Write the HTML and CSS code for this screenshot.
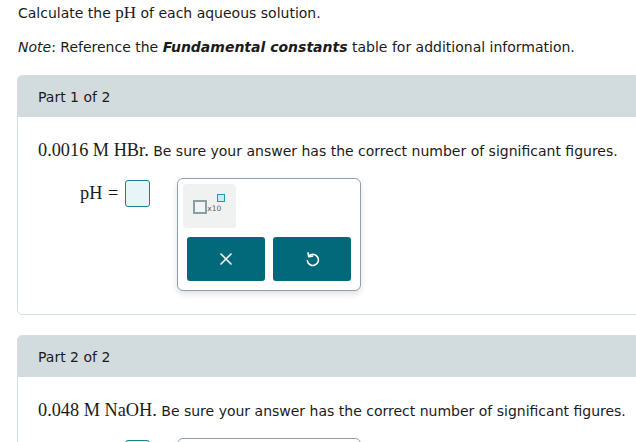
FILE: index.html
```html
<!DOCTYPE html>
<html>
<head>
<meta charset="utf-8">
<link rel="stylesheet" href="styles.css">
</head>
<body>
<div class="page">
  <div class="intro">
    <p class="line1">Calculate the <span class="math">pH</span> of each aqueous solution.</p>
    <p class="line2"><i>Note</i>: Reference the <b><i>Fundamental constants</i></b> table for additional information.</p>
  </div>

  <section class="card">
    <div class="card-head">Part 1 of 2</div>
    <div class="card-body">
      <p class="question"><span class="math big">0.0016 M HBr.</span> Be sure your answer has the correct number of significant figures.</p>
      <div class="answer-row">
        <span class="math big label">pH <span class="eq">=</span></span>
        <span class="answer-box"></span>
        <div class="popup">
          <div class="tile">
            <span class="sci">
              <span class="sci-base"></span><span class="sci-x">x10</span><span class="sci-exp"></span>
            </span>
          </div>
          <div class="btns">
            <button class="btn" aria-label="clear">
              <svg width="14" height="14" viewBox="0 0 14 14"><path d="M2 2 L12 12 M12 2 L2 12" stroke="#fff" stroke-width="1.6" stroke-linecap="round" fill="none"/></svg>
            </button>
            <button class="btn" aria-label="undo">
              <svg width="17" height="17" viewBox="0 0 16 16"><path d="M4.4 5.0 A5.2 5.2 0 1 1 3.2 9.2" stroke="#fff" stroke-width="1.5" fill="none" stroke-linecap="round"/><path d="M3.8 1.8 L4.4 5.4 L7.9 4.8" stroke="#fff" stroke-width="1.5" fill="none" stroke-linecap="round" stroke-linejoin="round"/></svg>
            </button>
          </div>
        </div>
      </div>
    </div>
  </section>

  <section class="card card2">
    <div class="card-head">Part 2 of 2</div>
    <div class="card-body">
      <p class="question"><span class="math big">0.048 M NaOH.</span> Be sure your answer has the correct number of significant figures.</p>
      <div class="answer-row">
        <span class="math big label">pH <span class="eq">=</span></span>
        <span class="answer-box"></span>
        <div class="popup"></div>
      </div>
    </div>
  </section>
</div>
</body>
</html>
```
FILE: styles.css
```css
html, body {
  margin: 0;
  padding: 0;
  background: #fff;
  overflow: hidden;
}
body {
  font-family: "DejaVu Sans", Verdana, sans-serif;
  font-size: 14px;
  color: #1b1b1b;
}
.page {
  width: 700px;
}
.intro {
  padding: 3px 0 0 18px;
}
.intro p {
  margin: 0;
  line-height: 20px;
}
.intro .line2 {
  margin-top: 14px;
}
.math {
  font-family: "Liberation Serif", "Times New Roman", serif;
  font-size: 17px;
}
.math.big {
  font-size: 18.3px;
}
.card {
  margin: 18px 0 0 17px;
  border: 1px solid #d6dee1;
  border-radius: 5px;
  width: 680px;
  overflow: hidden;
}
.card2 {
  margin-top: 20px;
}
.card-head {
  background: #d2dbde;
  height: 41px;
  line-height: 42px;
  padding-left: 20px;
}
.card-body {
  padding: 23px 0 23px 20px;
}
.question {
  margin: 0;
  line-height: 20px;
  height: 20px;
}
.answer-row {
  display: flex;
  align-items: flex-start;
  margin: 18px 0 0 42px;
}
.label {
  margin-top: 6px;
  line-height: 18px;
  white-space: nowrap;
}
.eq {
  margin-left: 1px;
}
.answer-box {
  width: 23px;
  height: 25px;
  margin: 2px 0 0 7px;
  border: 1px solid #1a8091;
  border-radius: 3px;
  background: #e7f5f8;
}
.popup {
  margin-left: 27px;
  width: 172px;
  min-height: 101px;
  padding: 5px;
  border: 1px solid #8da2aa;
  border-radius: 6px;
  background: #fff;
  box-shadow: 0 3px 6px rgba(0, 0, 0, 0.12);
}
.tile {
  width: 53px;
  height: 44px;
  background: #f0f2f2;
  border-radius: 4px;
  position: relative;
}
.sci {
  position: absolute;
  left: 10px;
  top: 10px;
  width: 40px;
  height: 24px;
}
.sci-base {
  position: absolute;
  left: 0;
  top: 6px;
  width: 10px;
  height: 10px;
  border: 2px solid #8a9ea4;
  background: #f3f3f3;
}
.sci-x {
  position: absolute;
  left: 14px;
  top: 10px;
  font-size: 7.5px;
  font-family: "DejaVu Sans", sans-serif;
  color: #55636a;
  line-height: 9px;
}
.sci-exp {
  position: absolute;
  left: 24px;
  top: 0;
  width: 6px;
  height: 6px;
  border: 1.5px solid #1c9cb0;
  background: #c6ecf4;
}
.btns {
  display: flex;
  gap: 8px;
  margin: 9px 4px 4px 4px;
}
.btn {
  width: 78px;
  height: 44px;
  border: none;
  border-radius: 3px;
  background: #02697a;
  display: flex;
  align-items: center;
  justify-content: center;
  padding: 0;
}
```
